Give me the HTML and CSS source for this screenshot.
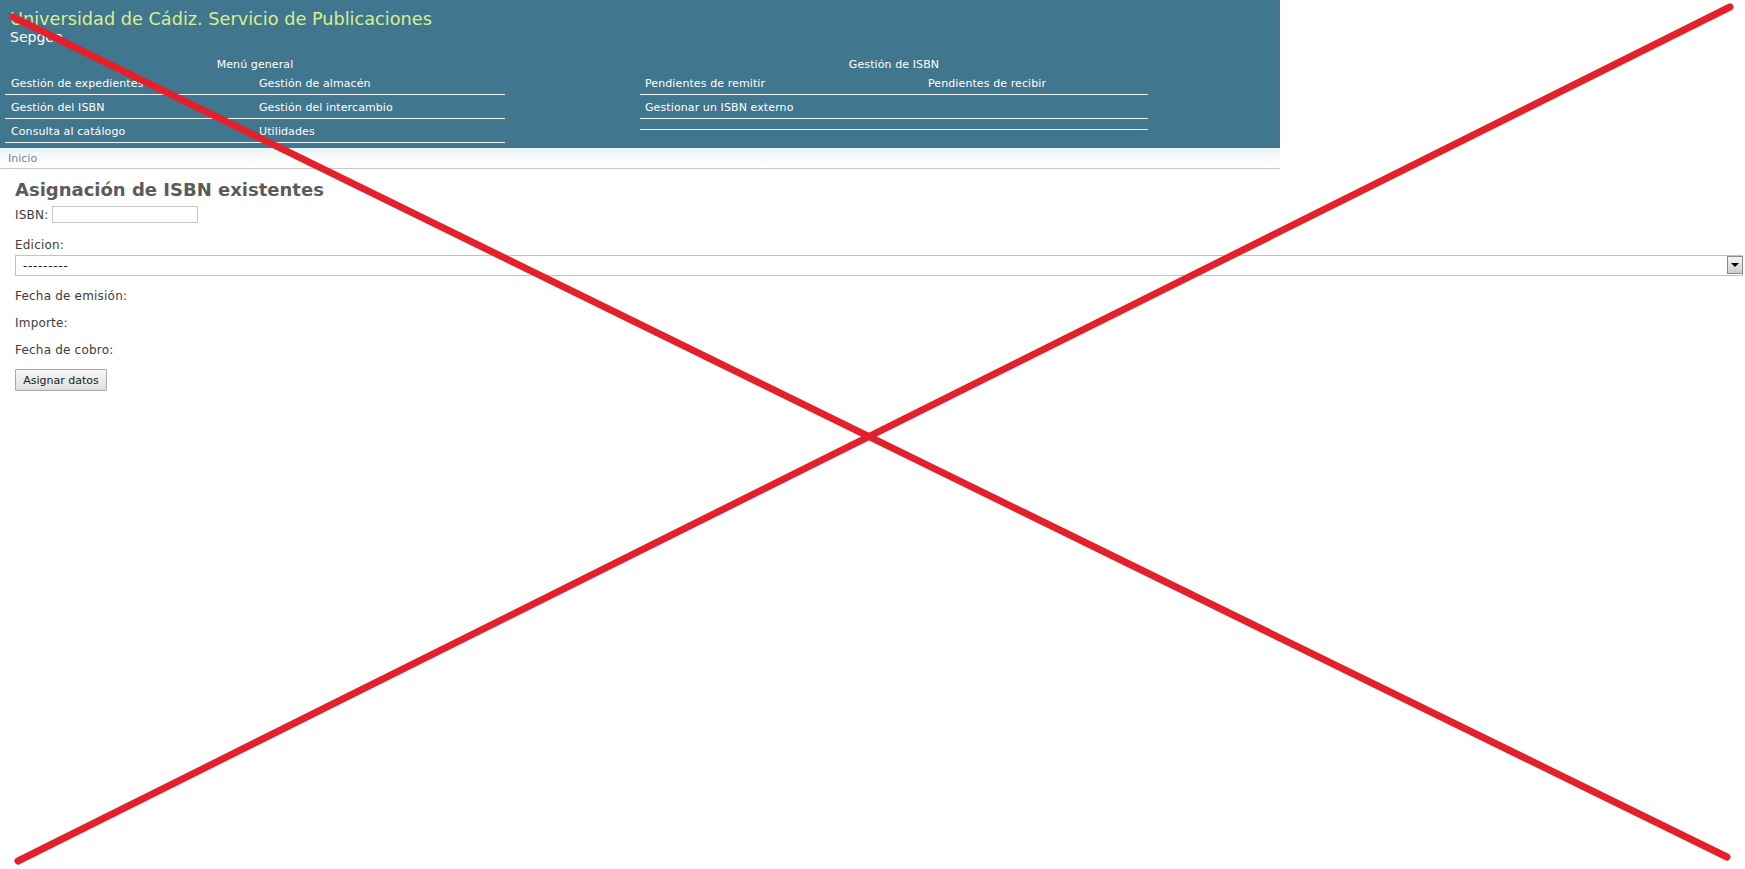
FILE: index.html
```html
<!DOCTYPE html>
<html lang="es">
<head>
<meta charset="utf-8">
<title>Sepgen - Asignación de ISBN existentes</title>
<link rel="stylesheet" href="styles.css">
</head>
<body>
<div class="header">
  <div class="site-title">Universidad de Cádiz. Servicio de Publicaciones</div>
  <div class="site-sub">Sepgen</div>
  <div class="menus">
    <div class="menu menu-left">
      <div class="menu-caption">Menú general</div>
      <div class="menu-row"><span class="c1">Gestión de expedientes</span><span class="c2">Gestión de almacén</span></div>
      <div class="menu-row"><span class="c1">Gestión del ISBN</span><span class="c2">Gestión del intercambio</span></div>
      <div class="menu-row"><span class="c1">Consulta al catálogo</span><span class="c2">Utilidades</span></div>
    </div>
    <div class="menu menu-right">
      <div class="menu-caption">Gestión de ISBN</div>
      <div class="menu-row"><span class="c1">Pendientes de remitir</span><span class="c2">Pendientes de recibir</span></div>
      <div class="menu-row"><span class="c1">Gestionar un ISBN externo</span><span class="c2"></span></div>
      <div class="menu-row empty"></div>
    </div>
  </div>
</div>
<div class="crumbs"><span class="crumb">Inicio</span></div>
<div class="content">
  <h1 class="page-title">Asignación de ISBN existentes</h1>
  <div class="field-inline"><label class="lbl">ISBN:</label><input class="text-input" type="text"></div>
  <div class="field-label">Edicion:</div>
  <div class="select-wrap"><select class="select"><option>---------</option></select></div>
  <div class="field-label gap">Fecha de emisión:</div>
  <div class="field-label gap2">Importe:</div>
  <div class="field-label gap2">Fecha de cobro:</div>
  <button class="btn" type="button">Asignar datos</button>
</div>
<svg class="cross" width="1745" height="869" viewBox="0 0 1745 869">
  <line x1="13" y1="17" x2="1727" y2="857" />
  <line x1="18" y1="861" x2="1730" y2="7" />
</svg>
</body>
</html>
```
FILE: styles.css
```css
html, body {
  margin: 0;
  padding: 0;
  background: #fff;
}
body {
  font-family: "DejaVu Sans", Verdana, sans-serif;
  color: #3a3a3a;
  width: 1745px;
  height: 869px;
  overflow: hidden;
  position: relative;
}
.header {
  width: 1280px;
  background: #41768f;
  padding-top: 8px;
  padding-bottom: 5px;
}
.site-title {
  color: #d9ee8e;
  font-size: 17.7px;
  line-height: 22px;
  padding-left: 10px;
}
.site-sub {
  color: #fff;
  font-size: 14px;
  line-height: 15px;
  padding-left: 10px;
}
.menus {
  display: flex;
  padding-top: 14px;
}
.menu {
  color: #fff;
  font-size: 11px;
  letter-spacing: 0.1px;
}
.menu-left {
  margin-left: 5px;
  width: 500px;
}
.menu-right {
  margin-left: 135px;
  width: 508px;
}
.menu-caption {
  text-align: center;
  line-height: 12px;
}
.menu-row {
  display: flex;
  height: 23px;
  border-bottom: 1px solid #eef3f5;
  box-sizing: content-box;
}
.menu-row span {
  display: block;
  padding-top: 5px;
  line-height: 15px;
  white-space: nowrap;
}
.menu-left .c1 { width: 242px; padding-left: 6px; }
.menu-left .c2 { width: 246px; padding-left: 6px; }
.menu-right .c1 { width: 278px; padding-left: 5px; }
.menu-right .c2 { width: 220px; padding-left: 5px; }
.menu-row.empty { height: 10px; }

.crumbs {
  width: 1280px;
  height: 20px;
  background: linear-gradient(#eaf3f6, #fcfcfc 60%, #fff);
  border-bottom: 1px solid #c8c8c8;
  font-size: 11px;
  line-height: 21px;
}
.crumb {
  color: #7084a0;
  padding-left: 8px;
}
.content {
  padding: 10px 2px 0 15px;
  font-size: 12px;
  letter-spacing: 0.2px;
  color: #3c3c3c;
}
.page-title {
  margin: 0 0 5px 0;
  font-size: 18px;
  line-height: 22px;
  font-weight: bold;
  letter-spacing: 0;
  color: #5b5b5b;
}
.field-inline {
  display: flex;
  align-items: center;
  height: 17px;
}
.lbl {
  line-height: 16px;
}
.text-input {
  margin: 0 0 0 4px;
  width: 146px;
  height: 17px;
  box-sizing: border-box;
  border: 1px solid #c6c6c6;
  padding: 0 2px;
  font: inherit;
}
.field-label {
  line-height: 16px;
  margin-top: 14px;
}
.field-label.gap { margin-top: 12px; }
.field-label.gap2 { margin-top: 11px; }
.select-wrap {
  position: relative;
  margin-top: 2px;
  height: 21px;
}
.select {
  -webkit-appearance: none;
  appearance: none;
  display: block;
  width: 100%;
  height: 21px;
  box-sizing: border-box;
  margin: 0;
  border: 1px solid #c2c2c2;
  border-radius: 0;
  background: #fff;
  color: #222;
  font-family: "DejaVu Sans", Verdana, sans-serif;
  font-size: 12px;
  letter-spacing: 0.7px;
  padding: 0 0 0 7px;
  outline: none;
}
.select-wrap::after {
  content: "";
  position: absolute;
  right: 0;
  top: 1px;
  width: 14px;
  height: 16px;
  border: 1px solid #8a8a8a;
  background: linear-gradient(#f4f4f4, #cfcfcf);
}
.select-wrap::before {
  content: "";
  position: absolute;
  right: 4px;
  top: 8px;
  width: 0;
  height: 0;
  border-left: 4px solid transparent;
  border-right: 4px solid transparent;
  border-top: 4px solid #000;
  z-index: 1;
}
.btn {
  display: block;
  margin-top: 11px;
  height: 22px;
  width: 92px;
  padding: 0;
  border: 1px solid #a8a8a8;
  border-radius: 1px;
  background: linear-gradient(#f7f7f7, #dedede);
  font-family: "DejaVu Sans", Verdana, sans-serif;
  font-size: 11px;
  letter-spacing: 0;
  color: #222;
}
.cross {
  position: absolute;
  left: 0;
  top: 0;
  pointer-events: none;
}
.cross line {
  stroke: #e4212b;
  stroke-width: 7;
  stroke-linecap: round;
}
```
